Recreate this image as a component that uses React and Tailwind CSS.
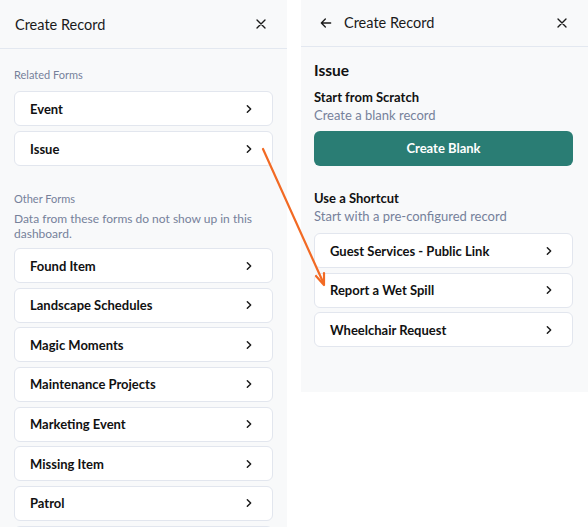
import React from "react";

const relatedForms = ["Event", "Issue"];
const otherForms = [
  "Found Item",
  "Landscape Schedules",
  "Magic Moments",
  "Maintenance Projects",
  "Marketing Event",
  "Missing Item",
  "Patrol",
  "Pool Closing",
];
const shortcuts = ["Guest Services - Public Link", "Report a Wet Spill", "Wheelchair Request"];

const Chevron = () => (
  <svg className="h-4 w-4 text-[#1a1a1a]" viewBox="0 0 24 24" fill="none" stroke="currentColor" strokeWidth={2.2} strokeLinecap="round" strokeLinejoin="round">
    <path d="M9.5 7l5 5-5 5" />
  </svg>
);

const Close = () => (
  <svg className="h-4 w-4 text-[#1a1a1a]" viewBox="0 0 24 24" fill="none" stroke="currentColor" strokeWidth={2} strokeLinecap="round">
    <path d="M6 6l12 12M18 6L6 18" />
  </svg>
);

const Back = () => (
  <svg className="h-4 w-4 text-[#1a1a1a]" viewBox="0 0 24 24" fill="none" stroke="currentColor" strokeWidth={2} strokeLinecap="round" strokeLinejoin="round">
    <path d="M19 12H5M11 6l-6 6 6 6" />
  </svg>
);

const FormRow = ({ label }) => (
  <div className="flex h-[35px] shrink-0 items-center justify-between rounded-md border border-[#e2e6ee] bg-white pl-[15px] pr-[15px]">
    <span className="text-[13px] leading-[18px] font-bold text-[#111]">{label}</span>
    <Chevron />
  </div>
);

export default function App() {
  return (
    <div className="relative flex h-[527px] w-[588px] gap-[14px] overflow-hidden bg-white font-['Lato',sans-serif]">
      {/* form picker */}
      <div className="flex h-full w-[287px] shrink-0 flex-col bg-[#f8f9fa]">
        <div className="flex h-[49px] shrink-0 items-center justify-between border-b border-[#e3e8f0] pl-[15px] pr-[18px]">
          <span className="pt-[1px] text-[14.5px] leading-[20px] text-[#1a1a1a]">Create Record</span>
          <Close />
        </div>
        <div className="flex flex-col px-[14px] pt-[18px]">
          <div className="text-[11px] leading-[16px] text-[#76819a]">Related Forms</div>
          <div className="mt-[8px] flex flex-col gap-[5px]">
            {relatedForms.map((f) => (
              <FormRow key={f} label={f} />
            ))}
          </div>
          <div className="mt-[25px] text-[11px] leading-[16px] text-[#76819a]">Other Forms</div>
          <div className="mt-[4px] text-[12px] leading-[15px] text-[#76819a]">
            Data from these forms do not show up in this dashboard.
          </div>
          <div className="mt-[7px] flex flex-col gap-[4.67px]">
            {otherForms.map((f) => (
              <FormRow key={f} label={f} />
            ))}
          </div>
        </div>
      </div>

      {/* selected form */}
      <div className="flex h-[392px] flex-1 flex-col bg-[#f8f9fa]">
        <div className="flex h-[47px] shrink-0 items-center justify-between border-b border-[#e3e8f0] pl-[17px] pr-[18px]">
          <div className="flex items-center gap-[10px]">
            <Back />
            <span className="text-[14.5px] leading-[20px] text-[#1a1a1a]">Create Record</span>
          </div>
          <Close />
        </div>
        <div className="flex flex-col pl-[13px] pr-[15px] pt-[13px]">
          <div className="text-[15.5px] leading-[20px] font-bold text-[#111]">Issue</div>
          <div className="mt-[8px] text-[13px] leading-[18px] font-bold text-[#111]">Start from Scratch</div>
          <div className="text-[13px] leading-[18px] text-[#76819a]">Create a blank record</div>
          <button className="mt-[7px] flex h-[35px] items-center justify-center rounded-md bg-[#2a7d74] text-[13px] font-bold text-white">
            Create Blank
          </button>
          <div className="mt-[23px] text-[13px] leading-[18px] font-bold text-[#111]">Use a Shortcut</div>
          <div className="text-[13px] leading-[18px] text-[#76819a]">Start with a pre-configured record</div>
          <div className="mt-[8px] flex flex-col gap-[4.5px]">
            {shortcuts.map((s) => (
              <FormRow key={s} label={s} />
            ))}
          </div>
        </div>
      </div>

      {/* callout arrow */}
      <svg className="pointer-events-none absolute left-0 top-0" width="588" height="527" viewBox="0 0 588 527">
        <path d="M263 149L323 282" stroke="#f26a24" strokeWidth={2.2} strokeLinecap="round" fill="none" />
        <path d="M316 276L324 285L324 273" stroke="#f26a24" strokeWidth={2.2} strokeLinecap="round" strokeLinejoin="round" fill="none" />
      </svg>
    </div>
  );
}
